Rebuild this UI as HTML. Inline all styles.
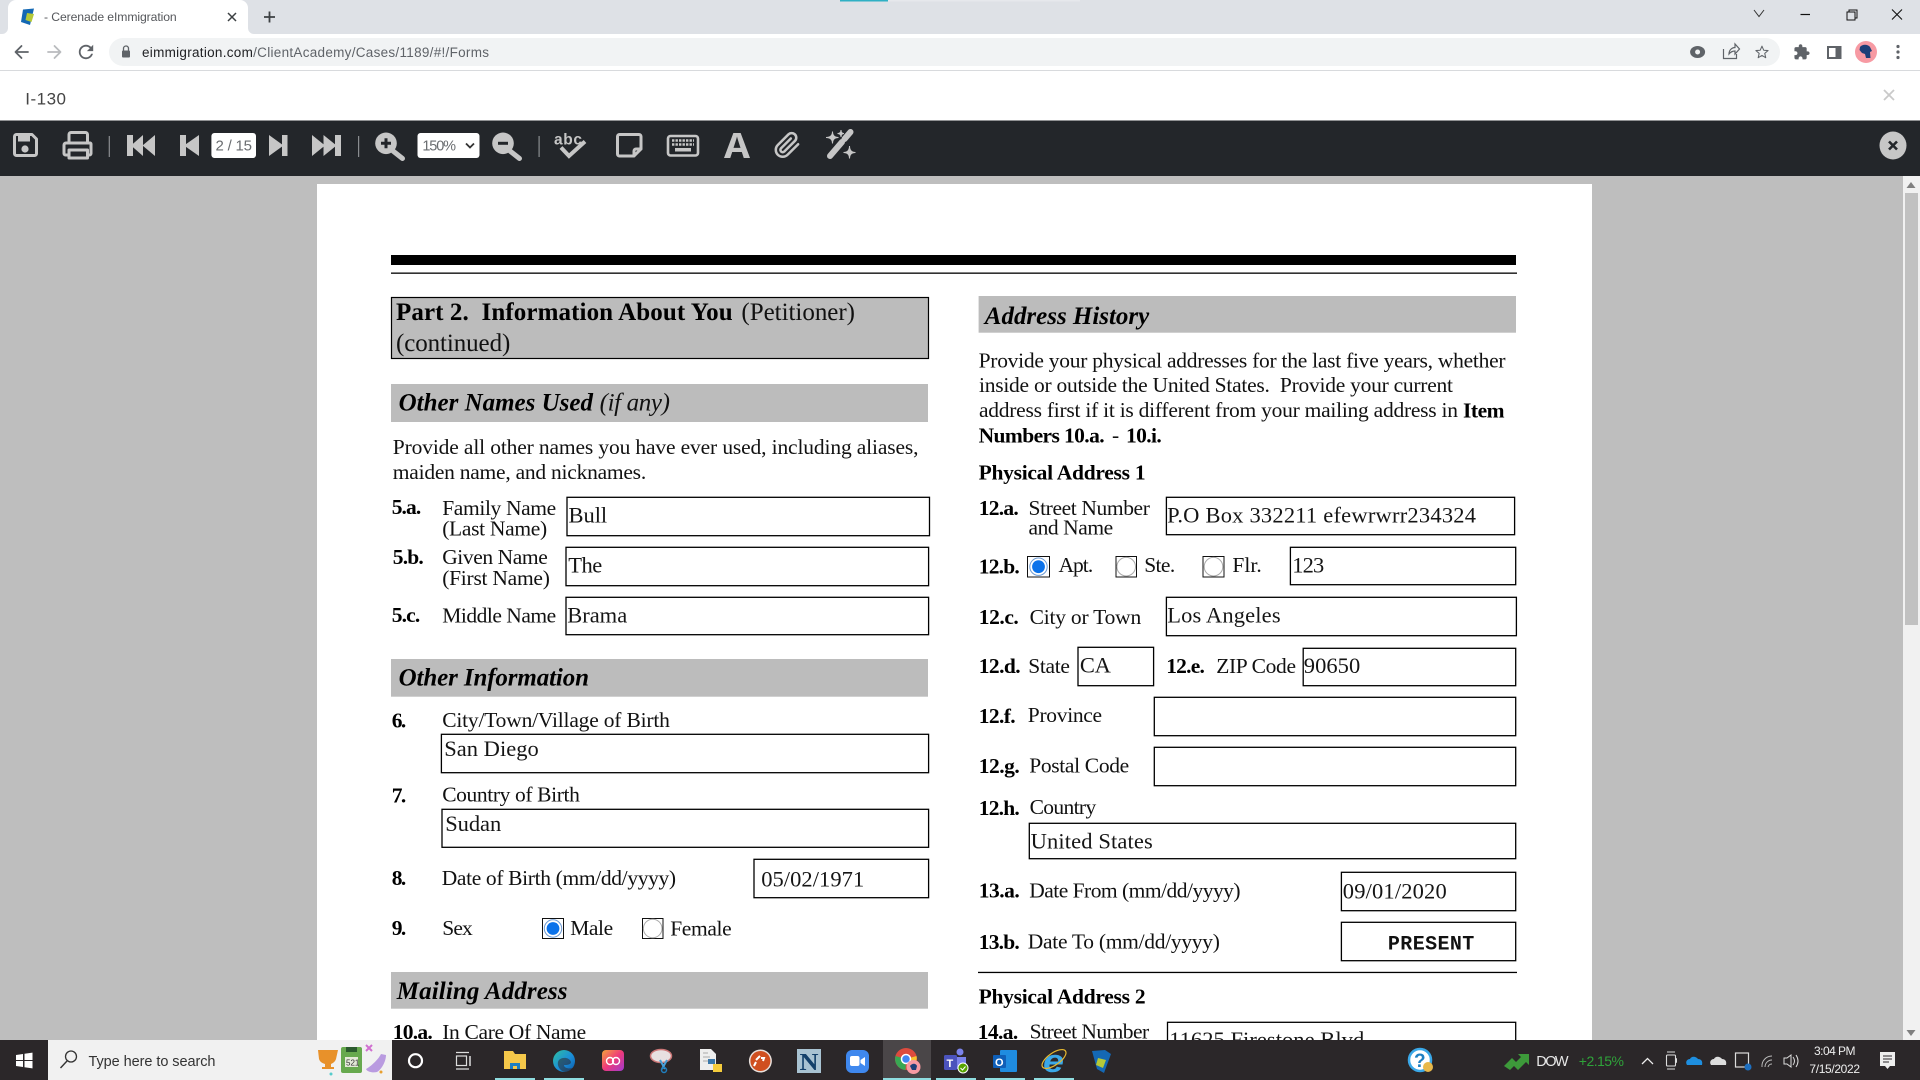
<!DOCTYPE html>
<html lang="en"><head><meta charset="utf-8"><title>Cerenade eImmigration</title>
<style>
html,body{margin:0;padding:0;width:1920px;height:1080px;overflow:hidden;background:#fff}
svg{display:block;position:absolute;left:0;top:0}
text{white-space:pre}
.s,.l,.b,.v,.h,.hi,.hb{font-family:"Liberation Serif",serif;fill:#111}
.l{font-size:21.5px;transform:translate(-.8px,0)}
.b{font-size:21.5px;font-weight:bold;fill:#000;transform:translate(-.8px,.8px)}
.v{font-size:22.5px;fill:#151515;transform:translate(-.8px,0)}
.h{font-size:25px;fill:#111}
.hb{font-size:25px;font-weight:bold;fill:#000;transform:translate(-1px,0)}
.hi{font-size:25px;font-weight:bold;font-style:italic;fill:#000}
.a{font-family:"Liberation Sans",sans-serif}
.box{fill:#fff;stroke:#000;stroke-width:1.3}
.bar{fill:#bcbcbc}
.rb{fill:#fff;stroke:#111;stroke-width:1}
.ic{fill:none;stroke:#c6c6c6;stroke-width:3;stroke-linejoin:round;stroke-linecap:round}
.if{fill:#c6c6c6}
.cr{fill:none;stroke:#5f6368;stroke-width:1.8;stroke-linecap:round;stroke-linejoin:round}
.cf{fill:#5f6368}
</style></head><body>
<svg width="1920" height="1080" viewBox="0 0 1920 1080" xmlns="http://www.w3.org/2000/svg">
<defs>
<linearGradient id="edge" x1="0" y1="0" x2="1" y2="1"><stop offset="0" stop-color="#2fc0a0"/><stop offset=".55" stop-color="#1b8ed8"/><stop offset="1" stop-color="#0c5aa8"/></linearGradient>
<linearGradient id="cc" x1="0" y1="0" x2="1" y2="1"><stop offset="0" stop-color="#f7a33a"/><stop offset=".5" stop-color="#ee3a7a"/><stop offset="1" stop-color="#a03ad0"/></linearGradient>
</defs>

<!-- app area -->
<rect x="0" y="176" width="1920" height="870" fill="#bebebe"/>
<rect x="317" y="184" width="1275" height="860" fill="#fff"/>
<rect x="1903" y="176" width="17" height="870" fill="#f1f1f1"/>
<rect x="1905" y="193" width="13" height="432" fill="#c1c1c1"/>
<path d="M1911 182l4.500 6h-9z" fill="#808080"/>
<path d="M1911 1036l4.500-6h-9z" fill="#808080"/>

<!-- form rules -->
<rect x="391" y="255" width="1125" height="10" fill="#000"/>
<rect x="391" y="272.500" width="1126" height="1.300" fill="#000"/>

<!-- LEFT COLUMN -->
<rect x="391.500" y="297.500" width="537" height="61" fill="#bcbcbc" stroke="#000" stroke-width="1.200"/>
<text class="hb" x="397" y="320" textLength="336.600">Part 2.  Information About You</text>
<text class="h" x="741.400" y="320" textLength="113.600">(Petitioner)</text>
<text class="h" x="396" y="351" textLength="114.300">(continued)</text>

<rect class="bar" x="391" y="384" width="537" height="38"/>
<text class="hi" x="398.600" y="410.700" textLength="194.400">Other Names Used</text>
<text class="h" font-style="italic" x="599.600" y="410.700" textLength="70.400">(if any)</text>

<text class="l" x="393.600" y="454" textLength="525.700">Provide all other names you have ever used, including aliases,</text>
<text class="l" x="393.600" y="479" textLength="253.400">maiden name, and nicknames.</text>

<text class="b" x="392.500" y="513" textLength="29.500">5.a.</text>
<text class="l" x="443" y="515" textLength="114">Family Name</text>
<text class="l" x="443" y="535.500" textLength="105">(Last Name)</text>
<rect class="box" x="567" y="497.300" width="362.500" height="38.400"/>
<text class="v" x="569.300" y="522.700" textLength="38.700">Bull</text>

<text class="b" x="393.600" y="563" textLength="31">5.b.</text>
<text class="l" x="443" y="564" textLength="105.600">Given Name</text>
<text class="l" x="443" y="585" textLength="107.700">(First Name)</text>
<rect class="box" x="566" y="547.300" width="362.600" height="38.400"/>
<text class="v" x="569" y="572.700" textLength="34">The</text>

<text class="b" x="392.500" y="621" textLength="28.500">5.c.</text>
<text class="l" x="443" y="622.700" textLength="114">Middle Name</text>
<rect class="box" x="566" y="597.300" width="362.600" height="37.400"/>
<text class="v" x="568" y="622.700" textLength="60">Brama</text>

<rect class="bar" x="391" y="659" width="537" height="37.700"/>
<text class="hi" x="398.600" y="685.700" textLength="190.400">Other Information</text>

<text class="b" x="392.500" y="726.700" textLength="14.500">6.</text>
<text class="l" x="443" y="727" textLength="227.700">City/Town/Village of Birth</text>
<rect class="box" x="441.400" y="734.300" width="487.200" height="38.400"/>
<text class="v" x="445" y="756" textLength="94.600">San Diego</text>

<text class="b" x="392.500" y="801.700" textLength="14.500">7.</text>
<text class="l" x="443" y="801.700" textLength="137.700">Country of Birth</text>
<rect class="box" x="442" y="809.300" width="486.600" height="38"/>
<text class="v" x="446" y="831" textLength="56">Sudan</text>

<text class="b" x="392.500" y="884" textLength="14.500">8.</text>
<text class="l" x="442.500" y="885" textLength="234.400">Date of Birth (mm/dd/yyyy)</text>
<rect class="box" x="754" y="859.300" width="174.600" height="38.400"/>
<text class="v" x="762" y="886.700" textLength="103">05/02/1971</text>

<text class="b" x="392.500" y="934" textLength="14.500">9.</text>
<text class="l" x="443" y="935" textLength="30.600">Sex</text>
<rect class="rb" x="542.500" y="918.500" width="21" height="20"/>
<circle cx="553" cy="928.500" r="8.700" fill="#fff" stroke="#6d9bd4" stroke-width="1"/>
<circle cx="553" cy="928.500" r="6.400" fill="#0b72ea"/>
<text class="l" x="571" y="935" textLength="43">Male</text>
<rect class="rb" x="642.500" y="918.500" width="20.500" height="20"/>
<circle cx="652.700" cy="928.500" r="9.300" fill="#fff" stroke="#aaa" stroke-width="1"/>
<text class="l" x="671" y="935.700" textLength="61.500">Female</text>

<rect class="bar" x="391" y="972" width="537" height="36.700"/>
<text class="hi" x="396.800" y="999" textLength="170.700">Mailing Address</text>
<text class="b" x="393.600" y="1038" textLength="40">10.a.</text>
<text class="l" x="443" y="1039" textLength="144">In Care Of Name</text>

<!-- RIGHT COLUMN -->
<rect class="bar" x="978.600" y="296" width="537.400" height="36.700"/>
<text class="hi" x="984.800" y="324" textLength="164.400">Address History</text>

<text class="l" x="979.400" y="367.300" textLength="527">Provide your physical addresses for the last five years, whether</text>
<text class="l" x="979.800" y="392.100" textLength="474">inside or outside the United States.  Provide your current</text>
<text class="l" x="979.800" y="417" textLength="479">address first if it is different from your mailing address in</text>
<text class="b" x="1463.800" y="416.500" textLength="41.600">Item</text>
<text class="b" x="979.400" y="441.500" textLength="126">Numbers 10.a.</text>
<text class="l" x="1112.800" y="442" textLength="7">-</text>
<text class="b" x="1126.800" y="441.500" textLength="35.800">10.i.</text>
<text class="b" x="979.400" y="478.500" textLength="167">Physical Address 1</text>

<text class="b" x="979.600" y="514" textLength="40">12.a.</text>
<text class="l" x="1029.300" y="515" textLength="121.400">Street Number</text>
<text class="l" x="1029.300" y="534.700" textLength="84.700">and Name</text>
<rect class="box" x="1166.400" y="497.300" width="348.200" height="37.400"/>
<text class="v" x="1167.900" y="522.700" textLength="308.900">P.O Box 332211 efewrwrr234324</text>

<text class="b" x="979.600" y="572.700" textLength="41">12.b.</text>
<rect class="rb" x="1027.500" y="556.500" width="22" height="20.500"/>
<circle cx="1038.500" cy="566.700" r="8.700" fill="#fff" stroke="#6d9bd4" stroke-width="1"/>
<circle cx="1038.500" cy="566.700" r="6.400" fill="#0b72ea"/>
<text class="l" x="1059.300" y="572" textLength="34.700">Apt.</text>
<rect class="rb" x="1116" y="556.500" width="20.500" height="20.500"/>
<circle cx="1126.200" cy="566.700" r="9.300" fill="#fff" stroke="#aaa" stroke-width="1"/>
<text class="l" x="1145" y="572" textLength="31">Ste.</text>
<rect class="rb" x="1203" y="556.500" width="21" height="20.500"/>
<circle cx="1213.500" cy="566.700" r="9.300" fill="#fff" stroke="#aaa" stroke-width="1"/>
<text class="l" x="1233.200" y="572" textLength="29.300">Flr.</text>
<rect class="box" x="1290.400" y="547.300" width="225.300" height="37.400"/>
<text class="v" x="1293" y="572.700" textLength="32">123</text>

<text class="b" x="979.600" y="623" textLength="40">12.c.</text>
<text class="l" x="1030.400" y="624" textLength="111.600">City or Town</text>
<rect class="box" x="1166.400" y="597.300" width="350" height="38.400"/>
<text class="v" x="1168" y="622.700" textLength="113.400">Los Angeles</text>

<text class="b" x="979.600" y="672.300" textLength="41.800">12.d.</text>
<text class="l" x="1029" y="673" textLength="41.700">State</text>
<rect class="box" x="1078" y="647.300" width="75.600" height="38.400"/>
<text class="v" x="1080.700" y="672.300" textLength="31">CA</text>
<text class="b" x="1167" y="672.300" textLength="38.700">12.e.</text>
<text class="l" x="1217" y="673" textLength="79.800">ZIP Code</text>
<rect class="box" x="1303.200" y="648.300" width="212.500" height="37.400"/>
<text class="v" x="1304.600" y="673" textLength="56.400">90650</text>

<text class="b" x="979.600" y="722" textLength="36.800">12.f.</text>
<text class="l" x="1028.600" y="722" textLength="74.300">Province</text>
<rect class="box" x="1154.300" y="697.300" width="361.400" height="38.400"/>

<text class="b" x="979.600" y="772.300" textLength="41">12.g.</text>
<text class="l" x="1030" y="772.700" textLength="100">Postal Code</text>
<rect class="box" x="1154.300" y="747.300" width="361.400" height="38.400"/>

<text class="b" x="979.600" y="814" textLength="41">12.h.</text>
<text class="l" x="1030.400" y="814" textLength="66.600">Country</text>
<rect class="box" x="1029.300" y="823.300" width="486.400" height="35.400"/>
<text class="v" x="1031.400" y="848.300" textLength="122.200">United States</text>

<text class="b" x="979.600" y="896.700" textLength="41">13.a.</text>
<text class="l" x="1030" y="897.300" textLength="211.400">Date From (mm/dd/yyyy)</text>
<rect class="box" x="1341.400" y="872.300" width="174.300" height="38.400"/>
<text class="v" x="1343.600" y="898.300" textLength="103.900">09/01/2020</text>

<text class="b" x="979.600" y="948" textLength="41">13.b.</text>
<text class="l" x="1028.600" y="948.300" textLength="192.100">Date To (mm/dd/yyyy)</text>
<rect class="box" x="1341.400" y="922.300" width="174.300" height="38.400"/>
<text font-family="Liberation Mono, monospace" font-weight="bold" font-size="20" fill="#111" x="1387.900" y="949.300" textLength="86.400">PRESENT</text>

<rect x="978" y="971.800" width="539" height="1.300" fill="#000"/>
<text class="b" x="979.400" y="1002.700" textLength="167">Physical Address 2</text>
<text class="b" x="978.600" y="1038.300" textLength="40.400">14.a.</text>
<text class="l" x="1030.400" y="1038.300" textLength="119.600">Street Number</text>
<rect class="box" x="1167.500" y="1022.300" width="348.200" height="40"/>
<text class="v" x="1170" y="1047" textLength="195">11625 Firestone Blvd</text>

<!-- Chrome: tab strip -->
<rect x="0" y="0" width="1920" height="34" fill="#dee1e6"/>
<rect x="840" y="0" width="48" height="1.500" fill="#2fb0c4"/>
<rect x="888" y="0" width="192" height="1.500" fill="#e6e8ec"/>
<path d="M0 34h2a6 6 0 0 0 6-6V8a8 8 0 0 1 8-8h224a8 8 0 0 1 8 8v20a6 6 0 0 0 6 6z" fill="#fff"/>
<path d="M23 9.500l11-1-4 16.500-9-3z" fill="#1468b4"/>
<path d="M27 13l7 1-2.500 8-6-2z" fill="#b5c938"/>
<text class="a" x="44" y="21" font-size="12.200" fill="#55575b" textLength="132.700">- Cerenade eImmigration</text>
<path d="M228 13l8 8M236 13l-8 8" stroke="#3c4043" stroke-width="1.500" fill="none"/>
<path d="M269.500 11.500v11M264 17h11" stroke="#3c4043" stroke-width="1.800" fill="none"/>
<path d="M1754 10l5 6.500 5-6.500" stroke="#333" stroke-width="1" fill="none"/>
<path d="M1800.500 14.500h9.500" stroke="#111" stroke-width="1.200"/>
<rect x="1847" y="12" width="8" height="8" fill="none" stroke="#111"/>
<path d="M1849 12v-2h8v8h-2" fill="none" stroke="#111"/>
<path d="M1892 9.500l10 10M1902 9.500l-10 10" stroke="#111" stroke-width="1.100"/>

<!-- Chrome: toolbar -->
<rect x="0" y="34" width="1920" height="36" fill="#fff"/>
<rect x="0" y="70" width="1920" height="1" fill="#d8dadd"/>
<rect x="109" y="38" width="1671" height="28" rx="14" fill="#f1f3f4"/>
<path class="cr" d="M28 52H16M21.500 46l-6 6 6 6"/>
<path class="cr" style="stroke:#b9bbbe" d="M48 52h12M54.500 46l6 6-6 6"/>
<path class="cf" transform="translate(75.200,41.200) scale(.9)" d="M17.650 6.350C16.200 4.900 14.210 4 12 4c-4.420 0-7.990 3.580-7.990 8s3.570 8 7.990 8c3.730 0 6.840-2.550 7.730-6h-2.080c-.82 2.330-3.040 4-5.650 4-3.310 0-6-2.690-6-6s2.690-6 6-6c1.660 0 3.140.69 4.220 1.780L13 11h7V4l-2.350 2.350z"/>
<rect x="122" y="50.500" width="8" height="7" rx="1" fill="#5f6368"/>
<path d="M123.500 50.500v-2a2.500 2.500 0 0 1 5 0v2" fill="none" stroke="#5f6368" stroke-width="1.300"/>
<text class="a" x="142" y="57" font-size="13.500" fill="#202124" textLength="347"><tspan>eimmigration.com</tspan><tspan fill="#5f6368">/ClientAcademy/Cases/1189/#!/Forms</tspan></text>
<ellipse cx="1697.600" cy="52" rx="7.500" ry="6" fill="#5f6368"/><circle cx="1697.600" cy="52" r="2.500" fill="#f1f3f4"/>
<path d="M1723.500 49v9.500h13V54M1729 54c0-4 3-6.500 6-6.500V44l4.500 5-4.500 5v-3c-2 0-4 .5-6 3z" fill="none" stroke="#5f6368" stroke-width="1.200"/>
<path class="cr" transform="translate(1755,45) scale(.58)" d="M12 2l3 7 7.500.6-5.700 4.900 1.700 7.400L12 18l-6.500 3.900 1.700-7.400L1.500 9.600 9 9z"/>
<path class="cf" transform="translate(1793,43.500) scale(.72)" d="M20.500 11H19V7c0-1.100-.9-2-2-2h-4V3.500C13 2.120 11.880 1 10.500 1S8 2.120 8 3.500V5H4c-1.100 0-1.990.9-1.990 2v3.800H3.500c1.490 0 2.700 1.210 2.700 2.700s-1.210 2.700-2.700 2.700H2V20c0 1.100.9 2 2 2h3.800v-1.500c0-1.490 1.210-2.700 2.700-2.700 1.490 0 2.700 1.210 2.700 2.700V22H17c1.100 0 2-.9 2-2v-4h1.500c1.380 0 2.500-1.120 2.500-2.500S21.880 11 20.500 11z"/>
<rect x="1828" y="47" width="12.500" height="11" fill="#fff" stroke="#5f6368" stroke-width="2"/>
<rect x="1835.500" y="47" width="5" height="11" fill="#5f6368"/>
<circle cx="1866" cy="52" r="11" fill="#f79aa3"/>
<path d="M1860 47c2-3 8-3 10 0l2 4-2 1 .5 6h-4.500l-1-4-3-1-2.500-3z" fill="#1d3f78"/>
<circle cx="1898" cy="46.500" r="1.600" fill="#5f6368"/><circle cx="1898" cy="52" r="1.600" fill="#5f6368"/><circle cx="1898" cy="57.500" r="1.600" fill="#5f6368"/>

<!-- modal header -->
<rect x="0" y="71" width="1920" height="49.500" fill="#fff"/>
<text class="a" x="25.300" y="104.500" font-size="17" fill="#444" textLength="40.700">I-130</text>
<path d="M1884 90l10 10M1894 90l-10 10" stroke="#c9c9c9" stroke-width="1.800" fill="none"/>

<!-- PDF toolbar -->
<rect x="0" y="120.500" width="1920" height="55.500" fill="#23262a"/>
<!-- save -->
<path class="ic" d="M16.500 134.500h15.500l4.500 4.500v14.500a2 2 0 0 1-2 2h-18a2 2 0 0 1-2-2v-17a2 2 0 0 1 2-2z"/>
<path class="if" d="M18 134h12v7.500H18z"/><circle class="if" cx="25" cy="149" r="3.600"/>
<!-- print -->
<path class="ic" d="M69 143v-8.500a2 2 0 0 1 2-2h14.500a2 2 0 0 1 2 2V143"/>
<path class="ic" d="M69 155h-3.500a1.500 1.500 0 0 1-1.500-1.500v-8.500a2 2 0 0 1 2-2h24a1 1 0 0 1 1 1v9.500a1.500 1.500 0 0 1-1.500 1.500H88"/>
<rect class="ic" x="69" y="150" width="18.500" height="8"/>
<circle cx="87" cy="146.500" r="1.300" fill="#23262a"/>
<rect x="108.700" y="136" width="1.200" height="21" fill="#8a8d90"/>
<!-- nav -->
<path class="if" d="M127 135h6v21h-6zM131 145.500l12-10.500v21zM142.500 145.500l12.500-10.500v21z"/>
<path class="if" d="M180 135h6v21h-6zM184 145.500l15-10.500v21z"/>
<rect x="211.400" y="133" width="44.600" height="25" rx="3" fill="#fff"/>
<text class="a" x="215.500" y="150.500" font-size="15" fill="#6a6d70" textLength="36.500">2 / 15</text>
<path class="if" d="M269 135l14.500 10.500L269 156zM282 135h5.500v21H282z"/>
<path class="if" d="M312 135l13 10.500-13 10.500zM323.500 135l13 10.500-13 10.500zM335 135h6v21h-6z"/>
<rect x="358" y="136" width="1.200" height="21" fill="#8a8d90"/>
<!-- zoom in -->
<circle class="if" cx="386" cy="143.300" r="10.800"/>
<path d="M393 151l9.500 7.500" stroke="#c6c6c6" stroke-width="5" stroke-linecap="round"/>
<path d="M381 143.300h10M386 138.300v10" stroke="#23262a" stroke-width="3"/>
<rect x="417.500" y="133" width="62" height="25" rx="3" fill="#fff"/>
<text class="a" x="422.400" y="150.500" font-size="14.500" fill="#6a6d70" textLength="33.600">150%</text>
<path d="M466 143.500l4 4 4-4" fill="none" stroke="#333" stroke-width="1.800"/>
<!-- zoom out -->
<circle class="if" cx="503" cy="143.300" r="10.800"/>
<path d="M510 151l9.500 7.500" stroke="#c6c6c6" stroke-width="5" stroke-linecap="round"/>
<path d="M498 143.300h10" stroke="#23262a" stroke-width="3"/>
<rect x="538.500" y="136" width="1.200" height="21" fill="#8a8d90"/>
<!-- abc -->
<text x="554" y="144.500" font-family="Liberation Sans,sans-serif" font-weight="bold" font-size="15.500" fill="#c6c6c6" textLength="28">abc</text>
<path d="M561 147.500l8 8.500 16-14.500" fill="none" stroke="#c6c6c6" stroke-width="4"/>
<!-- note -->
<path class="ic" d="M634 156h-14.500a2 2 0 0 1-2-2v-17.500a2 2 0 0 1 2-2H639a2 2 0 0 1 2 2V149zM634 156v-5a2 2 0 0 1 2-2h5"/>
<!-- keyboard -->
<rect x="668" y="136" width="30" height="19.500" rx="2.500" fill="none" stroke="#c6c6c6" stroke-width="2.600"/>
<path d="M672 140.500h22M672 144.500h22" stroke="#c6c6c6" stroke-width="2.600" stroke-dasharray="2.400 1.100"/>
<rect x="675" y="148" width="16" height="3.500" fill="#c6c6c6"/>
<!-- A -->
<text x="724" y="158" font-family="Liberation Mono,monospace" font-weight="bold" font-size="38" fill="#c6c6c6" textLength="26" lengthAdjust="spacingAndGlyphs">A</text>
<!-- clip -->
<path fill="none" stroke="#c6c6c6" stroke-width="2.200" stroke-linecap="round" stroke-linejoin="round" transform="translate(773.500,131.500) scale(1.150)" d="M21.440 11.050l-9.190 9.190a6 6 0 0 1-8.490-8.490l9.190-9.190a4 4 0 0 1 5.660 5.660l-9.200 9.190a2 2 0 0 1-2.830-2.830l8.490-8.480"/>
<!-- wand -->
<path d="M830 156l12-14" stroke="#c6c6c6" stroke-width="6" stroke-linecap="round"/>
<path d="M844.500 139l6-7" stroke="#c6c6c6" stroke-width="6" stroke-linecap="round"/>
<path class="if" d="M832.500 131.500Q832.500 137.500 838.500 137.500Q832.500 137.500 832.500 143.500Q832.500 137.500 826 137.500Q832.500 137.500 832.500 131.500z" stroke="#c6c6c6"/>
<path class="if" d="M842 131Q842 134.500 845 134.500Q842 134.500 842 138Q842 134.500 838.500 134.500Q842 134.500 842 131z" stroke="#c6c6c6" transform="translate(-1,-1)"/>
<path class="if" d="M849.500 146Q849.500 152.500 855.500 152.500Q849.500 152.500 849.500 158.500Q849.500 152.500 843.500 152.500Q849.500 152.500 849.500 146z" stroke="#c6c6c6"/>
<!-- close -->
<ellipse cx="1893" cy="145.500" rx="13.500" ry="14" fill="#c6c6c6"/>
<path d="M1889 141.500l8 8M1897 141.500l-8 8" stroke="#23262a" stroke-width="2.600"/>

<!-- TASKBAR -->
<rect x="0" y="1040" width="1920" height="40" fill="#2b2729"/>
<rect x="48" y="1040" width="344" height="40" fill="#f1f1f1"/>
<path d="M16 1055l7-1v6h-7zM24.500 1053.800l8-1.200v7.400h-8zM16 1061h7v6l-7-1zM24.500 1061h8v7.400l-8-1.200z" fill="#fff"/>
<circle cx="71" cy="1056.500" r="5.500" fill="none" stroke="#333" stroke-width="1.300"/>
<path d="M67 1061l-6.500 7" stroke="#333" stroke-width="1.400"/>
<text class="a" x="88.500" y="1066" font-size="14.500" fill="#333" textLength="127">Type here to search</text>
<!-- search highlights -->
<path d="M318 1050h20l-2 9c-1 3-3 4-5 5v3h3v2h-12v-2h3v-3c-3-1-5-2-6-5z" fill="#e8912a"/>
<rect x="341" y="1047" width="21" height="26" rx="2" fill="#67a94e"/>
<path d="M346 1047v5h11v-5z" fill="#2b5a2e"/>
<rect x="345" y="1057" width="13" height="10" fill="#e4ead8"/>
<text class="a" x="346" y="1065.500" font-size="8" fill="#333">521</text>
<path d="M366 1069c4-2 12-9 15-15l5 1c0 6-4 14-9 17-4 1-10 0-11-3z" fill="#b99be0"/>
<path d="M366 1045l6 6M372 1045l-6 6" stroke="#d070d0" stroke-width="2"/>
<circle cx="331" cy="1074" r="1.500" fill="#5cc"/><circle cx="381" cy="1072" r="1.500" fill="#e8a030"/>
<!-- cortana / task view -->
<circle cx="415.500" cy="1060.700" r="6.500" fill="none" stroke="#fff" stroke-width="2.200"/>
<path d="M456 1052.500h13M456 1069h13" stroke="#ddd" stroke-width="1.200"/>
<rect x="456.500" y="1056" width="10" height="9.500" fill="none" stroke="#ddd" stroke-width="1.200"/>
<path d="M470 1056v10" stroke="#ddd" stroke-width="1.500"/>
<!-- explorer -->
<path d="M504 1051h9l2 3h11v15h-22z" fill="#f5c84a"/>
<path d="M510 1063h10v6h-3v-3h-4v3h-3z" fill="#1d7fc2"/>
<!-- edge -->
<circle cx="564" cy="1061" r="11" fill="url(#edge)"/>
<path d="M558 1062c1-5 11-6 13 0 0 3-5 3-7 3 0 3 4 4 9 3-2 3-5 4-8 4-5-1-8-6-7-10z" fill="#2b2729" opacity=".55"/>
<!-- adobe -->
<rect x="602" y="1050" width="22" height="21" rx="4" fill="url(#cc)"/>
<circle cx="610" cy="1061" r="3.500" fill="none" stroke="#fff" stroke-width="1.400"/><circle cx="616" cy="1061" r="3.500" fill="none" stroke="#fff" stroke-width="1.400"/>
<!-- active app bg -->
<rect x="883" y="1040" width="48" height="40" fill="#4a4648"/>
<!-- underlines -->
<g fill="#8fdde0"><rect x="495" y="1078" width="40" height="2"/><rect x="544" y="1078" width="40" height="2"/><rect x="883" y="1078" width="48" height="2"/><rect x="936" y="1078" width="40" height="2"/><rect x="985" y="1078" width="40" height="2"/><rect x="1034" y="1078" width="40" height="2"/></g>
<!-- snip -->
<ellipse cx="661" cy="1056" rx="10.500" ry="6.500" fill="#e8e0e0" stroke="#c77" stroke-width="1.500"/>
<path d="M660 1060l5 9M667 1060l-5 9" stroke="#4aa0d8" stroke-width="2"/><circle cx="664" cy="1070" r="2.500" fill="none" stroke="#1f7fbf" stroke-width="1.500"/>
<!-- python -->
<path d="M700 1049h11l5 5v16h-16z" fill="#eee"/>
<path d="M703 1053h5M703 1057h7M703 1061h5" stroke="#aaa"/>
<path d="M708 1059h7v5h-7z" fill="#3a78aa"/><path d="M713 1064h9v8h-9z" fill="#f5cc3c"/>
<!-- remote -->
<circle cx="760.400" cy="1061" r="11.500" fill="#e8e0dc"/><circle cx="760.400" cy="1061" r="10" fill="#d04f1f"/>
<path d="M756 1060l4-4M756 1062l-2 4M761 1058l3 0-1 3" stroke="#fff" stroke-width="2" fill="none"/>
<!-- N -->
<rect x="797" y="1049" width="24" height="24" fill="#a9c3d2"/>
<text x="799.500" y="1070" font-family="Liberation Serif,serif" font-weight="bold" font-size="24" fill="#13406a" textLength="19" lengthAdjust="spacingAndGlyphs">N</text>
<!-- zoom -->
<rect x="846" y="1050" width="23" height="23" rx="6" fill="#3f88ee"/>
<rect x="850" y="1056" width="9.500" height="10" rx="2" fill="#fff"/><path d="M860.500 1060l4.500-3v9l-4.500-3z" fill="#fff"/>
<!-- chrome -->
<circle cx="906" cy="1059" r="11" fill="#dd4b3e"/>
<path d="M906 1059L895.500 1056a11 11 0 0 0 10 14z" fill="#38a853"/>
<path d="M906 1059l10.500-3a11 11 0 0 1-6 12z" fill="#f7c32e"/>
<circle cx="906" cy="1059" r="4.500" fill="#4285f4" stroke="#fff" stroke-width="1.500"/>
<circle cx="913.500" cy="1067" r="7" fill="#f79aa3"/><path d="M910 1066c2-3 6-3 7 0l-1 4h-4z" fill="#1d3f78"/>
<!-- teams -->
<rect x="944" y="1055" width="13" height="15" rx="1.500" fill="#4b53bc"/>
<text class="a" x="946.500" y="1067" font-size="11" font-weight="bold" fill="#fff">T</text>
<circle cx="960" cy="1052" r="3.500" fill="#7b83eb"/><path d="M957 1057h9v12h-9z" fill="#7b83eb"/>
<circle cx="963" cy="1068" r="5" fill="#57a300" stroke="#fff"/><path d="M960.500 1068l2 2 3-3.500" stroke="#fff" fill="none"/>
<!-- outlook -->
<rect x="1000" y="1050" width="17" height="22" rx="1" fill="#1f8ce0"/>
<rect x="993" y="1055" width="13" height="13" rx="1" fill="#0f5fb8"/>
<text class="a" x="995" y="1066" font-size="11" font-weight="bold" fill="#fff">O</text>
<!-- IE -->
<text class="a" x="1043" y="1072" font-size="32" font-weight="bold" font-style="italic" fill="#3aa8e8" textLength="21" lengthAdjust="spacingAndGlyphs">e</text>
<ellipse cx="1054" cy="1059" rx="14" ry="6" transform="rotate(-35 1054 1059)" fill="none" stroke="#e6b830" stroke-width="1.200"/>
<!-- cerenade -->
<path d="M1092 1051l13-1 6 4-7 19-7-4z" fill="#1468b4"/><path d="M1098 1058l8 2-3 8-7-3z" fill="#b5c938"/>
<!-- help -->
<circle cx="1420" cy="1060" r="11" fill="#fff" stroke="#3aa8e8" stroke-width="2.500"/>
<text class="a" x="1414" y="1067" font-size="19" font-weight="bold" fill="#1d7fc2">?</text>
<circle cx="1428" cy="1067" r="5" fill="#e8b84a"/>
<!-- DOW -->
<path d="M1504 1066l8-8 4 4 5-5-3-3h11v11l-3-3-8 8-4-4-4 4z" fill="#3d9a3a"/>
<text class="a" x="1536.300" y="1066" font-size="14.500" fill="#e8e8e8" textLength="32.300">DOW</text>
<text class="a" x="1578.800" y="1066" font-size="14" fill="#2fa33a" textLength="45.200">+2.15%</text>
<!-- tray -->
<path d="M1642 1064l5.500-5.500 5.500 5.500" fill="none" stroke="#eee" stroke-width="1.300"/>
<rect x="1666.500" y="1055" width="9" height="11" rx="1" fill="none" stroke="#ddd" stroke-width="1.100"/><path d="M1667 1052h8M1667 1069h8" stroke="#ddd"/><path d="M1675 1059l2-1v5l-2-1z" fill="#ddd"/>
<path d="M1687 1065c-2-3 0-6 3-6 1-3 6-3 8 0 3 0 5 2 4 6z" fill="#1e8fe0"/>
<path d="M1711 1065c-2-3 0-6 3-6 1-3 6-3 8 0 3 0 5 2 4 6z" fill="#ddd"/>
<rect x="1735.500" y="1053" width="13" height="14" fill="none" stroke="#ddd" stroke-width="1.200"/>
<circle cx="1748" cy="1067" r="3.500" fill="#1e6fc0"/>
<path d="M1762 1067a10 10 0 0 1 10-11M1765 1067a7 7 0 0 1 7-7M1768 1067a4 4 0 0 1 4-3" fill="none" stroke="#bbb" stroke-width="1"/>
<path d="M1784 1058h3l4-3v12l-4-3h-3zM1793 1057q3 4 0 8M1796 1055q4 6 0 12" fill="none" stroke="#ddd" stroke-width="1"/>
<text class="a" x="1814" y="1055" font-size="12" fill="#eee" textLength="41.500">3:04 PM</text>
<text class="a" x="1809.400" y="1073" font-size="12" fill="#eee" textLength="50.600">7/15/2022</text>
<path d="M1880 1052h15v14h-5l-2.500 3-2.500-3h-5z" fill="#eee"/>
<path d="M1883 1056h9M1883 1059h9M1883 1062h6" stroke="#2b2729" stroke-width="1"/>
</svg>
</body></html>
